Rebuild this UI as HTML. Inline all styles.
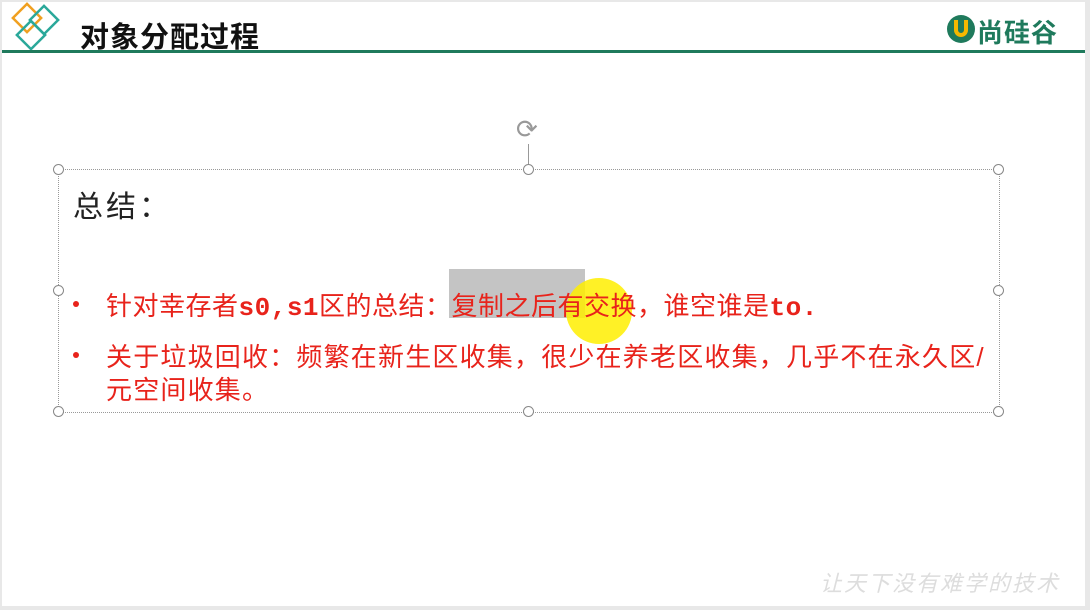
<!DOCTYPE html>
<html><head><meta charset="utf-8"><style>
body{margin:0;width:1090px;height:610px;background:#e8e8e8;position:relative;overflow:hidden;font-family:"Liberation Sans","Noto Sans CJK SC",sans-serif}
.slide{position:absolute;left:2px;top:2px;width:1083px;height:604px;background:#fff}
.t{position:absolute;white-space:nowrap}
.h{width:9px;height:9px;border:1.5px solid #888;border-radius:50%;background:#fff;position:absolute}
.r{color:#e8231b;font-size:26px}
.m{font-family:"Liberation Mono",monospace;font-weight:bold}
.dot{position:absolute;width:6px;height:6px;border-radius:50%;background:#e8231b}
</style></head><body>
<div class="slide">
<svg style="position:absolute;left:0;top:0" width="70" height="52">
<rect x="15" y="6" width="20" height="20" transform="rotate(45 25 16)" fill="none" stroke="#f0a020" stroke-width="2.5"/>
<rect x="32" y="8" width="20" height="20" transform="rotate(45 42 18)" fill="none" stroke="#2aa89a" stroke-width="2.5"/>
<rect x="19" y="23" width="20" height="20" transform="rotate(45 29 33)" fill="none" stroke="#2aa89a" stroke-width="2.5"/>
</svg>
<div class="t" style="left:78px;top:12px;font-size:29px;font-weight:bold;color:#111;letter-spacing:1px">对象分配过程</div>
<svg style="position:absolute;left:943px;top:11px" width="32" height="32"><circle cx="16" cy="16" r="14" fill="#1f7a5c"/><path d="M11 7v10a5 5 0 0 0 10 0V7" fill="none" stroke="#f5b800" stroke-width="4"/></svg>
<div class="t" style="left:975px;top:11px;font-size:26px;color:#1f7a5c;font-weight:bold;letter-spacing:1px">尚硅谷</div>
<div style="position:absolute;left:0;top:48px;width:1083px;height:3px;background:#1f7a5c"></div>
<div style="position:absolute;left:56px;top:167px;width:940px;height:242px;border:1px dotted #999"></div>
<div style="position:absolute;left:526px;top:142px;width:1px;height:25px;background:#999"></div>
<div class="t" style="left:514px;top:112px;font-size:26px;color:#999">⟳</div>
<div class="h" style="left:51px;top:162px"></div><div class="h" style="left:521px;top:162px"></div><div class="h" style="left:991px;top:162px"></div>
<div class="h" style="left:51px;top:283px"></div><div class="h" style="left:991px;top:283px"></div>
<div class="h" style="left:51px;top:404px"></div><div class="h" style="left:521px;top:404px"></div><div class="h" style="left:991px;top:404px"></div>
<div class="t" style="left:71px;top:180px;font-size:30px;color:#222;letter-spacing:3px">总结：</div>
<div style="position:absolute;left:447px;top:267px;width:136px;height:49px;background:#c4c4c4"></div>
<div style="position:absolute;left:564px;top:276px;width:66px;height:66px;border-radius:50%;background:#ffee00;opacity:.85"></div>
<div class="dot" style="left:71px;top:299px"></div>
<div class="t r" style="left:104px;top:284px;letter-spacing:0.5px">针对幸存者<span class="m">s0,s1</span>区的总结：复制之后有交换，谁空谁是<span class="m">to.</span></div>
<div class="dot" style="left:71px;top:350px"></div>
<div class="t r" style="left:104px;top:335px;letter-spacing:1.2px">关于垃圾回收：频繁在新生区收集，很少在养老区收集，几乎不在永久区/</div>
<div class="t r" style="left:104px;top:368px;letter-spacing:1.2px">元空间收集。</div>
<div class="t" style="left:818px;top:564px;font-size:22px;color:#ddd;font-style:italic;letter-spacing:2px">让天下没有难学的技术</div>
</div>
</body></html>
